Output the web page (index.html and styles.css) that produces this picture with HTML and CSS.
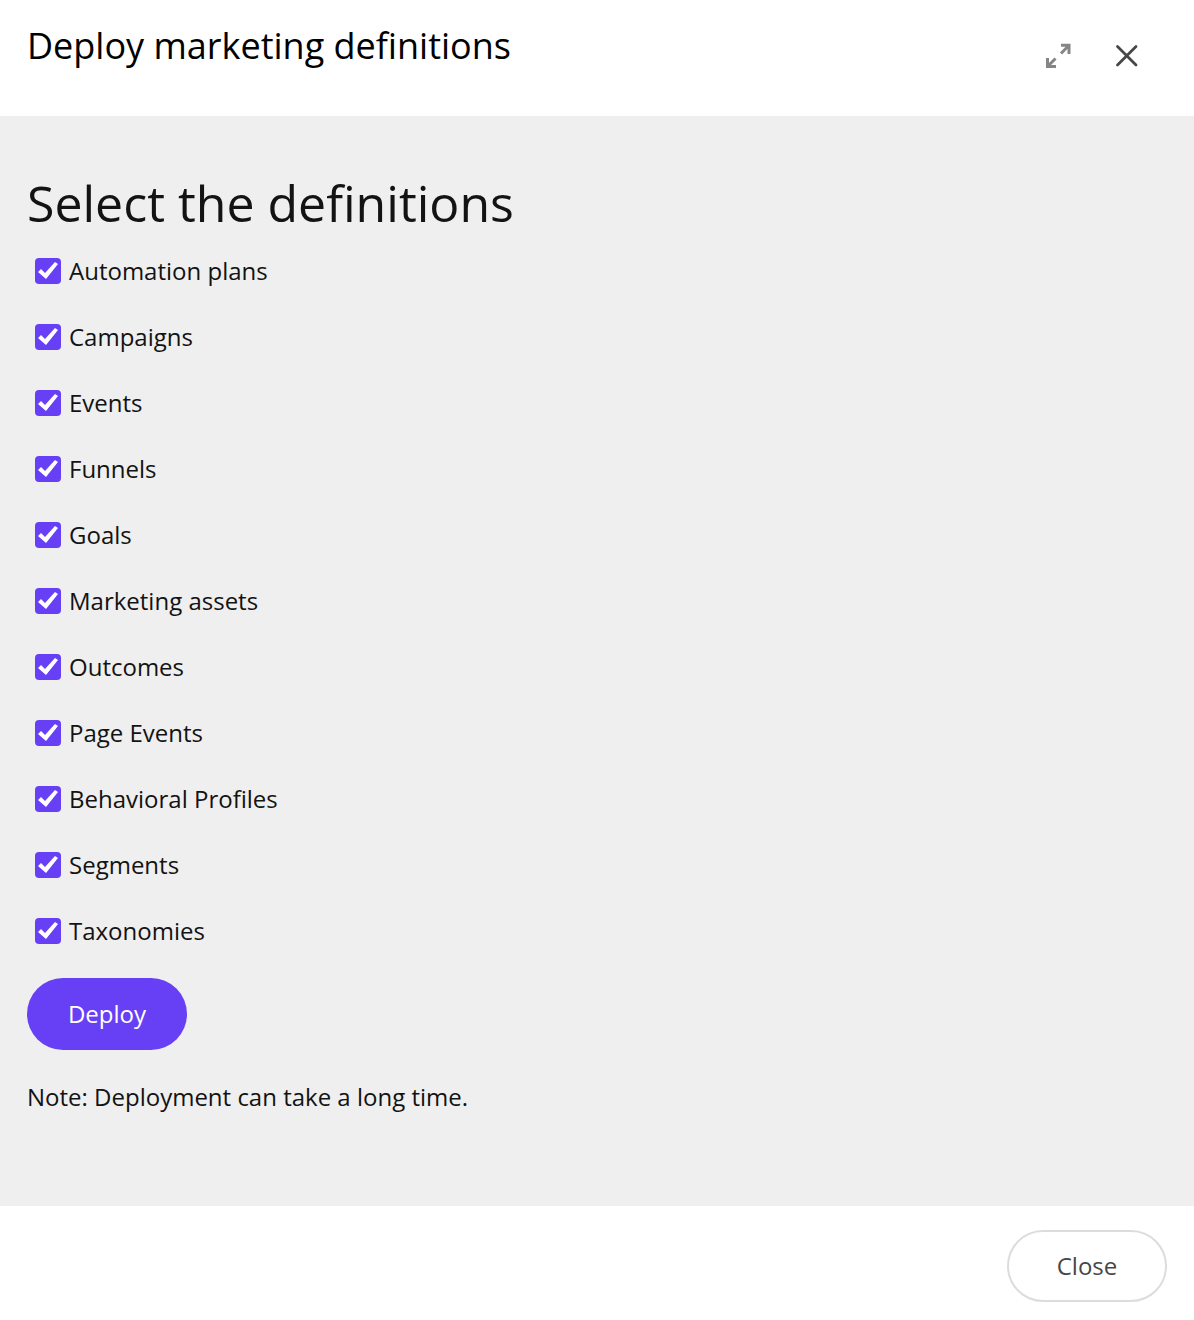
FILE: index.html
```html
<!DOCTYPE html>
<html lang="en">
<head>
    <meta charset="UTF-8">
    <meta name="viewport" content="width=device-width, initial-scale=1.0">
    <title>Deploy marketing definitions</title>
    <link rel="stylesheet" href="styles.css">
</head>
<body>
    <div class="dialog">
        <!-- Header -->
        <header class="dialog-header">
            <h1>Deploy marketing definitions</h1>
            <div class="dialog-tools">
                <button class="icon-btn" type="button" aria-label="Maximize">
                    <svg width="28" height="28" viewBox="0 0 28 28" fill="none" stroke="#858585" stroke-width="3">
                        <path d="M16 3.300H24V12M24 3.300L16 11.500"/>
                        <path d="M2.500 16V24.500H11M2.500 24.500L10.500 16.500"/>
                    </svg>
                </button>
                <button class="icon-btn" type="button" aria-label="Close dialog">
                    <svg width="28" height="28" viewBox="0 0 28 28" fill="none" stroke="#474747" stroke-width="2.800" stroke-linecap="round">
                        <path d="M4.500 4.500L23 23M23 4.500L4.500 23"/>
                    </svg>
                </button>
            </div>
        </header>

        <!-- Definitions -->
        <main class="dialog-body">
            <h2>Select the definitions</h2>
            <div class="definitions">
                <label><input type="checkbox" checked>Automation plans</label>
                <label><input type="checkbox" checked>Campaigns</label>
                <label><input type="checkbox" checked>Events</label>
                <label><input type="checkbox" checked>Funnels</label>
                <label><input type="checkbox" checked>Goals</label>
                <label><input type="checkbox" checked>Marketing assets</label>
                <label><input type="checkbox" checked>Outcomes</label>
                <label><input type="checkbox" checked>Page Events</label>
                <label><input type="checkbox" checked>Behavioral Profiles</label>
                <label><input type="checkbox" checked>Segments</label>
                <label><input type="checkbox" checked>Taxonomies</label>
            </div>
            <button class="btn btn-primary" type="button">Deploy</button>
            <p class="note">Note: Deployment can take a long time.</p>
        </main>

        <!-- Footer -->
        <footer class="dialog-footer">
            <button class="btn btn-default" type="button">Close</button>
        </footer>
    </div>
</body>
</html>
```
FILE: styles.css
```css
* {
    margin: 0;
    padding: 0;
    box-sizing: border-box;
}
body {
    font-family: "Open Sans", "Noto Sans", sans-serif;
    font-size: 24px;
    line-height: 32px;
    color: #131313;
    background: #fff;
}
.dialog {
    display: flex;
    flex-direction: column;
    min-height: 100vh;
}
button {
    font: inherit;
    cursor: pointer;
}
/* Header */
.dialog-header {
    display: flex;
    justify-content: space-between;
    padding: 20px 53px 44px 27px;
}
.dialog-header h1 {
    font-size: 36px;
    line-height: 52px;
    font-weight: 400;
    color: #000;
}
.dialog-tools {
    display: flex;
    align-items: center;
    gap: 40px;
    height: 72px;
    margin-bottom: -20px;
}
.icon-btn {
    display: flex;
    border: none;
    background: none;
}
/* Body */
.dialog-body {
    flex: 1;
    padding: 52px 27px;
    background: #efefef;
}
.dialog-body h2 {
    font-size: 50px;
    line-height: 70px;
    font-weight: 400;
}
.definitions {
    display: flex;
    flex-direction: column;
    align-items: flex-start;
    padding-left: 8px;
    margin-bottom: 14px;
}
.definitions label {
    display: flex;
    align-items: center;
    gap: 8px;
    height: 66px;
}
.definitions input {
    appearance: none;
    width: 26px;
    height: 26px;
    border: 2px solid #6740f5;
    border-radius: 4px;
    background: #fff;
}
.definitions input:checked {
    border: none;
    background: #6740f5;
}
.definitions input:checked::before {
    content: "";
    display: block;
    height: 26px;
    background: #fff;
    clip-path: polygon(3px 14px, 6px 11px, 10px 15px, 20px 4px, 23px 6px, 11px 21px);
}
/* Buttons */
.btn {
    min-width: 160px;
    height: 72px;
    padding: 0 40px;
    border-radius: 36px;
}
.btn-primary {
    border: none;
    background: #6740f5;
    color: #fff;
}
.btn-default {
    border: 2px solid #dcdcdc;
    background: #fff;
    color: #474747;
}
.note {
    margin-top: 31px;
}
/* Footer */
.dialog-footer {
    display: flex;
    justify-content: flex-end;
    padding: 24px 27px 18px;
}
```
